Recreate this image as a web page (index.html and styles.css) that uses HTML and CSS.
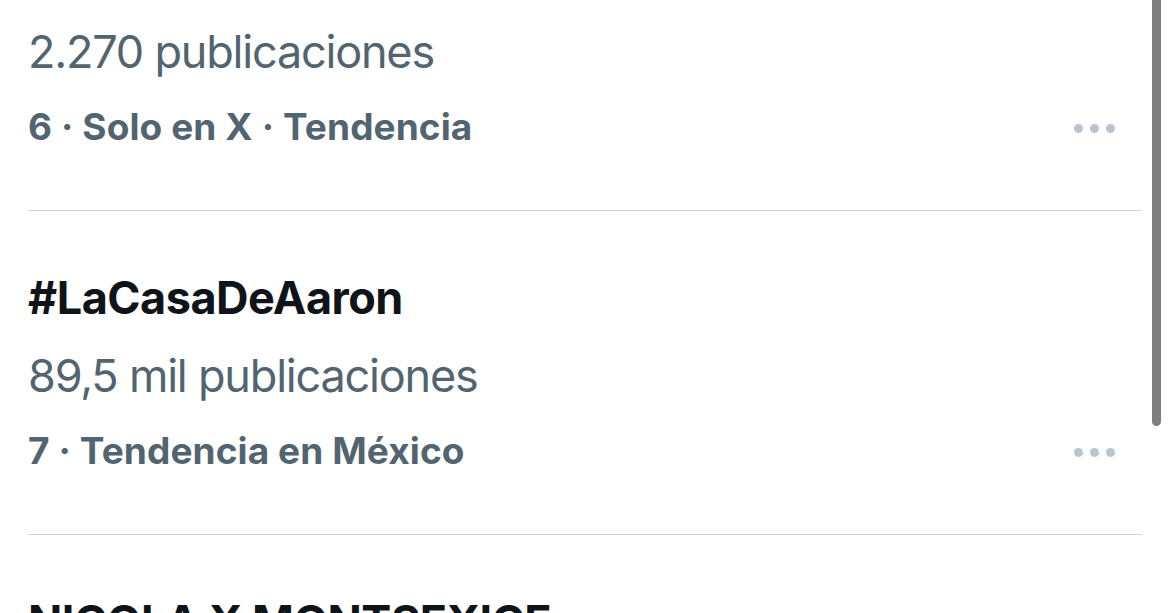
FILE: index.html
```html
<!DOCTYPE html>
<html lang="es">
<head>
  <meta charset="UTF-8">
  <meta name="viewport" content="width=device-width, initial-scale=1.0">
  <title>Tendencias</title>
  <link rel="stylesheet" href="styles.css">
</head>
<body>
  <div id="trends">
    <div class="trend first">
      <div class="count">2.270 publicaciones</div>
      <div class="meta-row">
        <span class="meta">6 · Solo en X · Tendencia</span>
        <span class="more"><i></i><i></i><i></i></span>
      </div>
    </div>
    <div class="trend">
      <div class="title">#LaCasaDeAaron</div>
      <div class="count">89,5 mil publicaciones</div>
      <div class="meta-row">
        <span class="meta">7 · Tendencia en México</span>
        <span class="more"><i></i><i></i><i></i></span>
      </div>
    </div>
    <div class="trend">
      <div class="title">NICOLA X MONTSEXICE</div>
    </div>
  </div>
  <div class="scrollbar"></div>
</body>
</html>
```

FILE: styles.css
```css
body, html {
  margin: 0;
  padding: 0;
  height: 100%;
  overflow: hidden;
  background: #fff;
  font-family: Inter, "Noto Sans", sans-serif;
}
#trends {
  display: flex;
  flex-direction: column;
}
.trend {
  margin: 0 28px;
  padding: 49px 0 46px;
  border-bottom: 1px solid #cfd2d4;
}
.trend.first {
  padding-top: 14px;
}
.title {
  font-size: 45px;
  line-height: 75px;
  margin-bottom: 3px;
  font-weight: 700;
  color: #0f1419;
  letter-spacing: -0.5px;
}
.count {
  font-size: 45px;
  line-height: 75px;
  color: #536471;
  letter-spacing: -1.2px;
}
.meta-row {
  display: flex;
  align-items: center;
  justify-content: space-between;
  height: 75px;
}
.meta {
  font-size: 37px;
  font-weight: 700;
  color: #536471;
  letter-spacing: 0.1px;
}
.more {
  display: flex;
  gap: 7px;
  margin-top: 4px;
  margin-right: 27px;
}
.more i {
  width: 9px;
  height: 9px;
  border-radius: 50%;
  background: #bac6cf;
}
.scrollbar {
  position: fixed;
  top: 0;
  right: 9px;
  width: 9px;
  height: 426px;
  background: #7f7f7f;
  border-radius: 0 0 5px 5px;
}
```
